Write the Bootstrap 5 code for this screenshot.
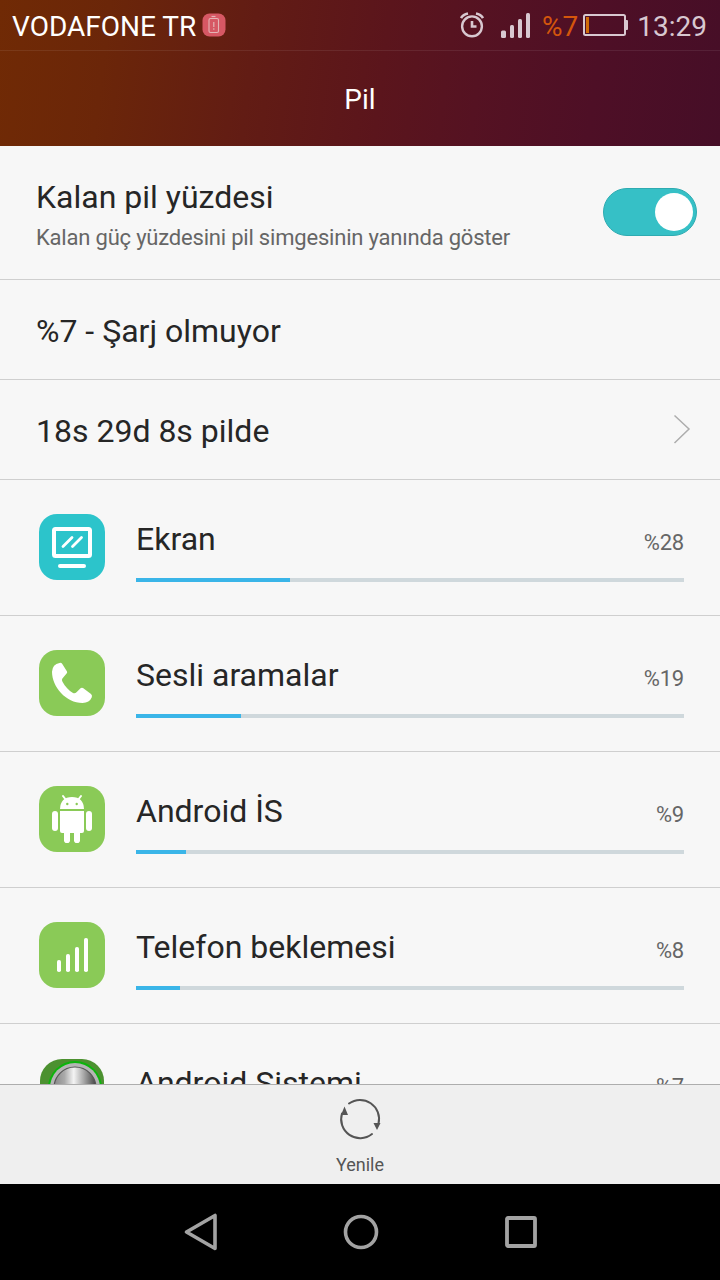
<!DOCTYPE html>
<html lang="tr">
<head>
<meta charset="utf-8">
<meta name="viewport" content="width=device-width, initial-scale=1">
<title>Pil</title>
<link href="https://cdn.jsdelivr.net/npm/bootstrap@5.3.0/dist/css/bootstrap.min.css" rel="stylesheet">
<script src="https://cdn.jsdelivr.net/npm/bootstrap@5.3.0/dist/js/bootstrap.bundle.min.js" defer></script>
<style>
body{font-family:Roboto,"Noto Sans",sans-serif;background:#f7f7f7;color:#262626;width:720px;height:1280px}
svg{display:block;flex:none}
.top{height:146px;color:#fff;background:linear-gradient(97deg,#702a05 0%,#6b2609 15%,#621c14 35%,#5b151c 53%,#551222 66%,#4e0f26 82%,#460e27 100%)}
.status{height:51px;font-size:28px;line-height:48px;padding-left:12px;padding-right:13px;border-bottom:1px solid #ffffff14}
.status span{padding-top:3px}
.status .dim{color:#d8c8d0}
.status .pct{color:#d4560c}
.title{height:95px;font-size:28px;line-height:97px}
.set{border-bottom:1px solid #cfcfcf;padding-left:36px}
.big{font-size:32px;line-height:38px}
.sub{font-size:22px;line-height:26px;color:#666;letter-spacing:-.2px;margin-top:9px}
.h1row{height:134px;padding-right:23px;padding-bottom:2px}
.h1row .label{padding-top:5px}
.h2row{height:100px;padding-right:29px;padding-bottom:2px}
.use{height:136px;padding:34px 36px 0 39px;gap:31px}
.share{font-size:22px;color:#666;letter-spacing:-.2px}
.use .progress{--bs-progress-height:4px;--bs-progress-bg:#cfd8dc;--bs-progress-bar-bg:#3ab5e8;--bs-progress-border-radius:0;margin-top:15px}
.use .big{line-height:41px;padding-top:5px}
.toggle{width:94px;height:48px;border:1px solid #2eabb1;background:#36c0c6;padding-right:3px}
.knob{width:38px;height:38px;background:#fff}
.bottom{height:100px;background:#efefef;border-top:1px solid #adadad;color:#555;font-size:18px;line-height:24px;padding-top:13px}
.sysbar{height:96px;background:#000}
</style>
</head>
<body class="d-flex flex-column overflow-hidden">
<header class="top flex-shrink-0">
  <div class="status d-flex align-items-center">
    <span>VODAFONE TR</span>
    <svg width="24" height="24" viewBox="0 0 24 24" style="margin-left:6px"><rect x=".5" y=".5" width="23" height="23" rx="7" fill="#d65864"/><path d="M9.500 3.500h4" stroke="#e3b5b5" stroke-width="1.200"/><rect x="7" y="5.500" width="9.500" height="14" rx="1.500" fill="none" stroke="#e3b5b5" stroke-width="1.100"/><path d="M11.800 9v5M11.800 15.300v1.500" stroke="#e3b5b5" stroke-width="1.200"/></svg>
    <div class="dim d-flex align-items-center ms-auto">
      <svg width="24" height="26" viewBox="0 0 24 26" fill="none" stroke="#d8c8d0"><circle cx="12" cy="14.300" r="9.900" stroke-width="2.400"/><path d="M12 9v5.500h4.500" stroke-width="2.600"/><path d="M1 6Q3 2.500 8 1.500M23 6Q21 2.500 16 1.500" stroke-width="2.600"/></svg>
      <svg width="29" height="25" viewBox="0 0 29 25" fill="#d8c8d0" style="margin-left:17px"><rect y="17.500" width="5" height="7.500" rx="1.500"/><rect x="9" y="12" width="4" height="13" rx="1.500"/><rect x="17" y="6" width="4" height="19" rx="1.500"/><rect x="25" width="4" height="25" rx="1.500"/></svg>
      <span class="pct" style="margin-left:12px">%7</span>
      <svg width="45" height="22" viewBox="0 0 45 22" style="margin-left:5px"><rect x="1" y="1" width="41" height="20" rx="1.500" fill="none" stroke="#d8c8d0" stroke-width="2"/><path d="M43 6h1q1 0 1 1v8q0 1-1 1h-1z" fill="#d8c8d0"/><path d="M3 3h3v16H3z" fill="#d06a08"/></svg>
      <span style="margin-left:9px">13:29</span>
    </div>
  </div>
  <div class="title text-center">Pil</div>
</header>

<main class="flex-grow-1 overflow-hidden" style="min-height:0">
  <div class="set h1row d-flex align-items-center justify-content-between">
    <div class="label"><div class="big">Kalan pil yüzdesi</div><div class="sub">Kalan güç yüzdesini pil simgesinin yanında göster</div></div>
    <div class="toggle rounded-pill d-flex align-items-center justify-content-end"><div class="knob rounded-circle"></div></div>
  </div>
  <div class="set h2row d-flex align-items-center"><div class="big pt-1">%7 - Şarj olmuyor</div></div>
  <div class="set h2row d-flex align-items-center justify-content-between"><div class="big pt-1">18s 29d 8s pilde</div>
    <svg width="18" height="30" viewBox="0 0 18 30" fill="none" stroke="#adadad" stroke-width="1.500"><path d="M1.500 1.500 16 15 1.500 29"/></svg></div>

  <div class="set use d-flex align-items-start">
    <svg width="66" height="66" viewBox="0 0 66 66"><rect width="66" height="66" rx="18" fill="#2cc4cb"/><g fill="none" stroke="#fff" stroke-linecap="round"><rect x="15" y="15" width="36" height="27" rx="1.500" stroke-width="4"/><path d="M24 32.500 33 23.500M33.500 32.500 42.500 23.500" stroke-width="2.800"/><path d="M21 52h24" stroke-width="4"/></g></svg>
    <div class="flex-grow-1"><div class="big d-flex justify-content-between align-items-baseline"><span>Ekran</span><span class="share">%28</span></div><div class="progress"><div class="progress-bar" style="width:28.1%"></div></div></div>
  </div>
  <div class="set use d-flex align-items-start">
    <svg width="66" height="66" viewBox="0 0 66 66"><rect width="66" height="66" rx="18" fill="#8aca57"/><path fill="#fff" d="M20.500 13Q22.200 12.300 23.300 14L28 21.500Q28.500 22.500 27.600 23.600L23.400 28.500Q22.300 30 23.500 31.800C26 36.500 30 40.800 34 43Q36 43.800 37.500 42.300L41.500 38.300Q42.600 37.300 44 38.100L52 44Q53.500 45.200 52.800 47.300Q50.500 53 43.500 53C27 53 13 37 13 21.800Q13.500 14 20.500 13Z"/></svg>
    <div class="flex-grow-1"><div class="big d-flex justify-content-between align-items-baseline"><span>Sesli aramalar</span><span class="share">%19</span></div><div class="progress"><div class="progress-bar" style="width:19.1%"></div></div></div>
  </div>
  <div class="set use d-flex align-items-start">
    <svg width="66" height="66" viewBox="0 0 66 66"><rect width="66" height="66" rx="18" fill="#8aca57"/><g fill="#fff"><path d="M21 23Q21.500 11 33 11T45 23Z"/><path d="M21 25h24v20q0 2-2 2H23q-2 0-2-2z"/><rect x="13" y="25" width="6" height="20" rx="3"/><rect x="47" y="25" width="6" height="20" rx="3"/><rect x="25" y="43" width="6" height="14" rx="2.800"/><rect x="35" y="43" width="6" height="14" rx="2.800"/></g><path d="m24 10 3 4M42 10l-3 4" stroke="#fff" stroke-width="2" stroke-linecap="round"/><g fill="#8aca57"><circle cx="28.300" cy="18" r="1.200"/><circle cx="37.700" cy="18" r="1.200"/></g></svg>
    <div class="flex-grow-1"><div class="big d-flex justify-content-between align-items-baseline"><span>Android İS</span><span class="share">%9</span></div><div class="progress"><div class="progress-bar" style="width:9.1%"></div></div></div>
  </div>
  <div class="set use d-flex align-items-start">
    <svg width="66" height="66" viewBox="0 0 66 66"><rect width="66" height="66" rx="18" fill="#8aca57"/><g fill="#fff"><rect x="18" y="38" width="4" height="12" rx="1.800"/><rect x="27" y="32" width="4" height="18" rx="1.800"/><rect x="36" y="25" width="4" height="25" rx="1.800"/><rect x="45" y="16" width="4" height="34" rx="1.800"/></g></svg>
    <div class="flex-grow-1"><div class="big d-flex justify-content-between align-items-baseline"><span>Telefon beklemesi</span><span class="share">%8</span></div><div class="progress"><div class="progress-bar" style="width:8.1%"></div></div></div>
  </div>
  <div class="set use d-flex align-items-start">
    <svg width="66" height="66" viewBox="0 0 66 66"><defs><linearGradient id="metal"><stop offset="0" stop-color="#888"/><stop offset=".25" stop-color="#aaa"/><stop offset=".47" stop-color="#f4f4f4"/><stop offset=".7" stop-color="#aaa"/><stop offset="1" stop-color="#444"/></linearGradient></defs><rect x="1" y="1" width="64" height="64" rx="22" fill="#4c9130"/><circle cx="36" cy="30" r="27" fill="#0cb40c"/><circle cx="36" cy="30" r="25" fill="#b5b5b5"/><circle cx="36" cy="30" r="21" fill="url(#metal)" stroke="#555" stroke-width="1.200"/></svg>
    <div class="flex-grow-1"><div class="big d-flex justify-content-between align-items-baseline"><span>Android Sistemi</span><span class="share">%7</span></div><div class="progress"><div class="progress-bar" style="width:7.1%"></div></div></div>
  </div>
</main>

<div class="bottom d-flex flex-column align-items-center flex-shrink-0">
  <svg width="42" height="42" viewBox="-.5 -.5 42 42"><g fill="none" stroke="#555" stroke-width="2" stroke-linecap="round"><path d="M9.500 5A19 19 0 0 1 39 25M32.500 35.500A19 19 0 0 1 2.500 15"/></g><path d="M5 8 8.500 16.500H1.500ZM37.500 31.500 34 24.500H41Z" fill="#555"/></svg>
  <span style="margin-top:13px">Yenile</span>
</div>
<nav class="sysbar d-flex justify-content-center align-items-center flex-shrink-0" style="gap:126px">
  <svg width="34" height="38" viewBox="-1 0 34 38" fill="none" stroke="#a3a3a3" stroke-width="3.600" stroke-linejoin="round"><path d="M31 2.500V35.500L2.500 19Z"/></svg>
  <svg width="36" height="36" viewBox="0 0 36 36" fill="none" stroke="#a3a3a3" stroke-width="3.600"><circle cx="18" cy="18" r="15.500"/></svg>
  <svg width="32" height="32" viewBox="0 0 32 32" fill="none" stroke="#a3a3a3" stroke-width="3.800"><rect x="2" y="2" width="28" height="28" rx="1"/></svg>
</nav>
</body>
</html>
